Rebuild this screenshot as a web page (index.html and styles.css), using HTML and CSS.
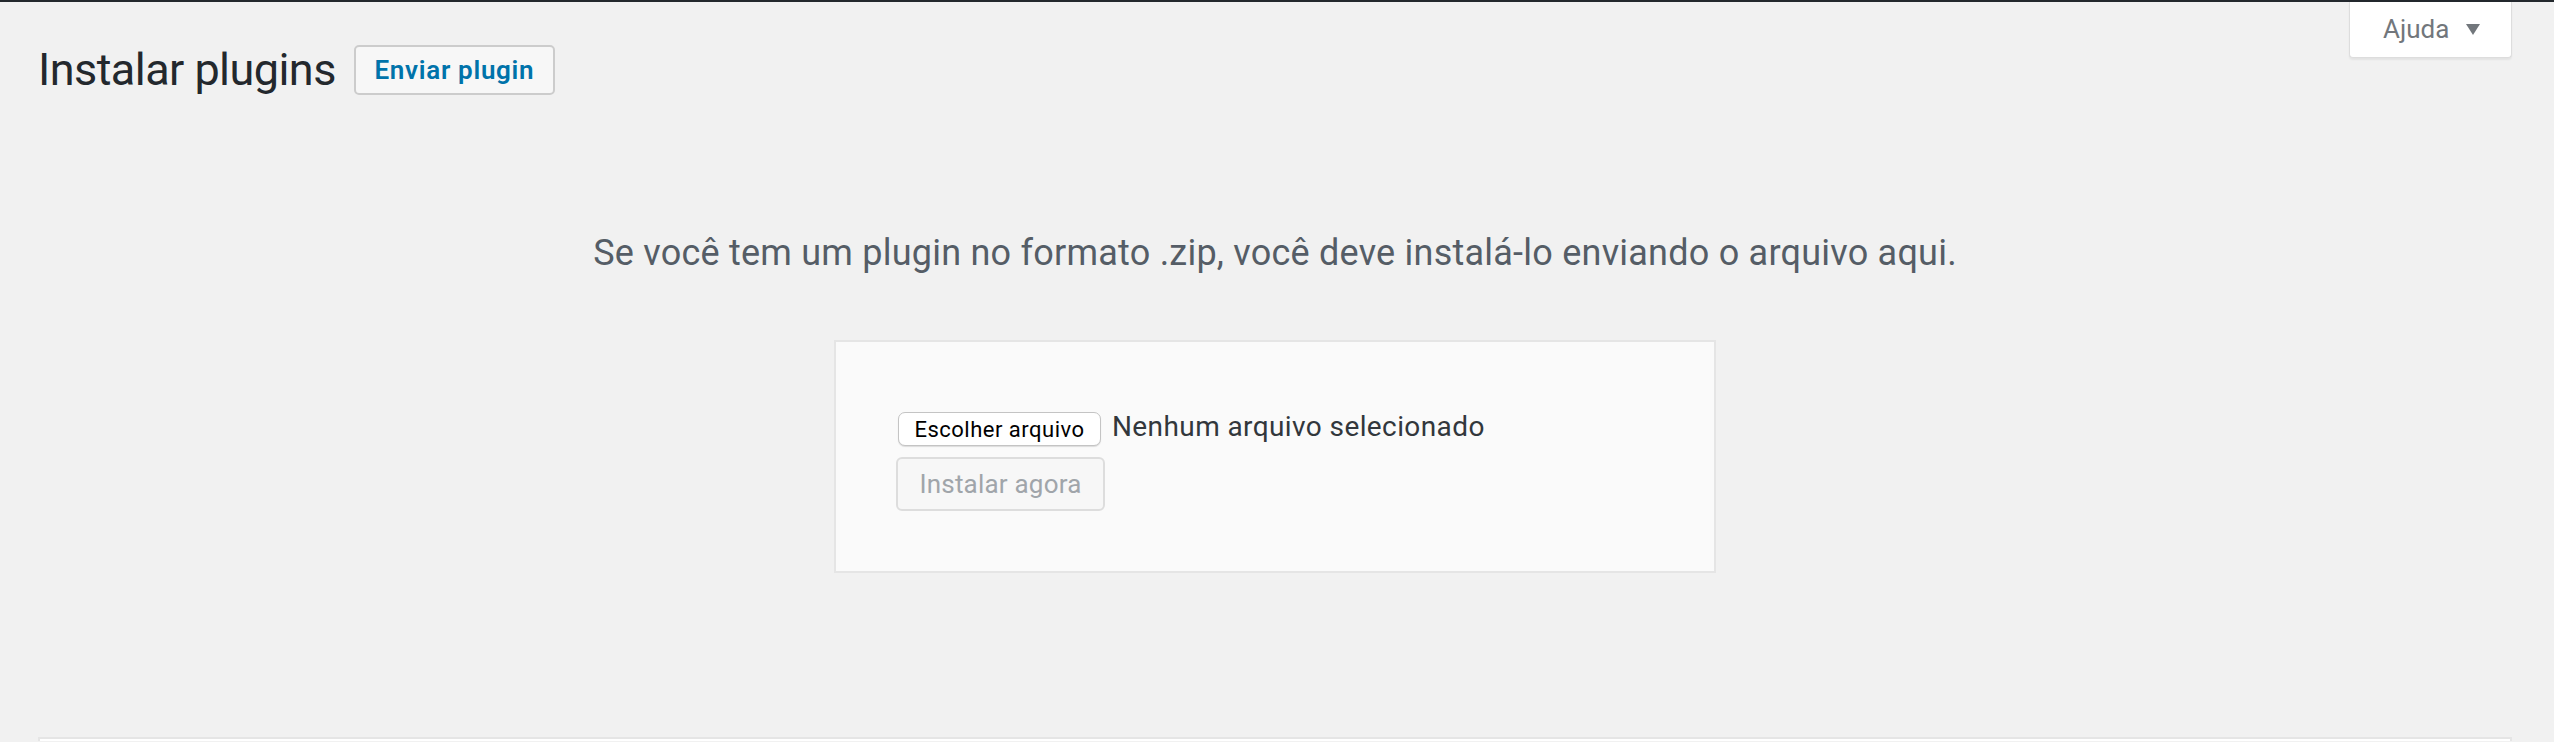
FILE: index.html
```html
<!DOCTYPE html>
<html lang="pt-BR">
<head>
<meta charset="utf-8">
<title>Instalar plugins</title>
<link rel="stylesheet" href="styles.css">
</head>
<body>
<div class="topbar"></div>
<div class="wrap">
  <div class="header">
    <div class="title-row">
      <h1 class="page-title">Instalar plugins</h1>
      <a class="title-action" href="#">Enviar plugin</a>
    </div>
    <button class="help-tab" type="button">Ajuda <span class="help-arrow"></span></button>
  </div>
  <p class="install-help">Se você tem um plugin no formato .zip, você deve instalá-lo enviando o arquivo aqui.</p>
  <form class="upload-form">
    <div class="file-row">
      <span class="file-btn">Escolher arquivo</span>
      <span class="file-name">Nenhum arquivo selecionado</span>
    </div>
    <button class="install-btn" type="button" disabled>Instalar agora</button>
  </form>
  <div class="bottom-panel"></div>
</div>
</body>
</html>
```

FILE: styles.css
```css
html, body {
  margin: 0;
  padding: 0;
  background: #f1f1f1;
  font-family: Roboto, "Noto Sans", "Liberation Sans", sans-serif;
  overflow: hidden;
}
.topbar {
  height: 2px;
  background: #23282d;
}
.wrap {
  padding: 0 42px 0 38px;
}
.header {
  display: flex;
  justify-content: space-between;
  align-items: flex-start;
}
.title-row {
  display: flex;
  align-items: center;
  margin-top: 43px;
  padding-left: 0;
  height: 50px;
}
.page-title {
  margin: 0;
  font-size: 45px;
  font-weight: 400;
  letter-spacing: -0.55px;
  line-height: 60px;
  color: #23282d;
}
.title-action {
  margin-left: 18px;
  box-sizing: border-box;
  width: 201px;
  height: 50px;
  display: flex;
  align-items: center;
  justify-content: center;
  border: 2px solid #cccccc;
  border-radius: 5px;
  background: #f7f7f7;
  color: #0073aa;
  font-size: 26px;
  font-weight: 600;
  letter-spacing: 0.7px;
  text-decoration: none;
}
.help-tab {
  box-sizing: border-box;
  width: 163px;
  height: 56px;
  margin: 0;
  padding: 0 0 2px 33px;
  display: flex;
  align-items: center;
  border: 1px solid #dddddd;
  border-top: none;
  border-radius: 0 0 4px 4px;
  background: #ffffff;
  box-shadow: 0 2px 2px rgba(0, 0, 0, 0.06);
  color: #72777c;
  font-family: inherit;
  font-size: 26px;
  font-weight: 400;
}
.help-arrow {
  display: inline-block;
  width: 0;
  height: 0;
  margin-left: 17px;
  margin-top: 2px;
  border-left: 7px solid transparent;
  border-right: 7px solid transparent;
  border-top: 11px solid #72777c;
}
.install-help {
  margin: 133px 0 0;
  line-height: 50px;
  font-size: 36px;
  letter-spacing: 0.23px;
  color: #555d66;
  text-align: center;
}
.upload-form {
  box-sizing: border-box;
  width: 882px;
  margin: 62px auto 0;
  padding: 60px;
  border: 2px solid #e5e5e5;
  background: #fafafa;
  display: flex;
  flex-direction: column;
  align-items: flex-start;
  gap: 11px;
}
.file-row {
  height: 44px;
  display: flex;
  align-items: flex-end;
}
.file-btn {
  box-sizing: border-box;
  margin-left: 2px;
  width: 203px;
  height: 34px;
  display: flex;
  align-items: center;
  justify-content: center;
  background: #ffffff;
  border: 1px solid #c4c4c4;
  border-radius: 7px;
  box-shadow: 0 1px 1px rgba(0, 0, 0, 0.12);
  color: #000000;
  font-size: 22px;
  letter-spacing: 0.5px;
}
.file-name {
  margin-left: 11px;
  font-size: 28px;
  letter-spacing: 0.4px;
  line-height: 40px;
  color: #32373c;
  position: relative;
  top: 1px;
}
.install-btn {
  box-sizing: border-box;
  width: 209px;
  height: 54px;
  margin: 0;
  padding: 0;
  border: 2px solid #dddddd;
  border-radius: 6px;
  background: #f7f7f7;
  color: #a0a5aa;
  font-family: inherit;
  font-size: 26px;
  letter-spacing: 0.2px;
}
.bottom-panel {
  margin-top: 164px;
  height: 2px;
  background: #ffffff;
  border: 2px solid #e5e5e5;
  border-bottom: none;
}
```
